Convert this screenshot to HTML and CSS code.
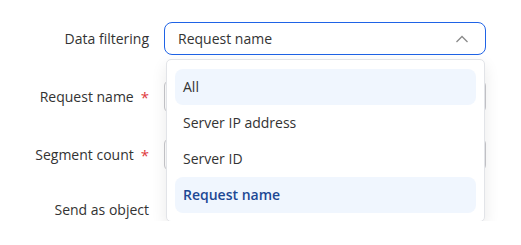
FILE: index.html
```html
<!DOCTYPE html>
<html lang="en">
<head>
    <meta charset="UTF-8">
    <meta name="viewport" content="width=device-width, initial-scale=1.0">
    <title>Data filtering</title>
    <link rel="stylesheet" href="styles.css">
</head>
<body>
    <form class="form">
        <label class="form-label">Data filtering</label>
        <div class="select-wrap">
            <div class="select open">
                <span class="select-value">Request name</span>
                <svg class="chevron" width="14" height="8" viewBox="0 0 14 8">
                    <path d="M1.5 7 L7 1.5 L12.5 7" fill="none" stroke="#8a8a8a" stroke-width="1.3"/>
                </svg>
            </div>
            <!-- Dropdown list -->
            <ul class="dropdown">
                <li class="option hover">All</li>
                <li class="option">Server IP address</li>
                <li class="option">Server ID</li>
                <li class="option selected">Request name</li>
            </ul>
        </div>

        <label class="form-label">Request name <span class="req">*</span></label>
        <div class="input"></div>

        <label class="form-label">Segment count <span class="req">*</span></label>
        <div class="input"></div>

        <label class="form-label small">Send as object</label>
        <div class="switch-row"></div>
    </form>
</body>
</html>
```

FILE: styles.css
```css
body {
    margin: 0;
    font-family: "Open Sans", "Noto Sans", Arial, sans-serif;
    font-size: 14px;
    color: #333;
    background-color: #fff;
}
.form {
    display: grid;
    grid-template-columns: 149px 1fr;
    column-gap: 15px;
    row-gap: 25px;
    padding: 22px 35px 0 0;
}
.form-label {
    display: flex;
    align-items: center;
    justify-content: flex-end;
    height: 33px;
    white-space: nowrap;
}
.form-label.small {
    height: 24px;
    margin-top: 1px;
}
.req {
    color: #e0393e;
    margin-left: 7px;
    font-size: 15px;
}
.select-wrap {
    position: relative;
}
.select {
    display: flex;
    align-items: center;
    justify-content: space-between;
    height: 33px;
    box-sizing: border-box;
    padding: 0 16px 0 13px;
    border: 1px solid #1f63e6;
    border-radius: 8px;
}
.chevron {
    display: block;
}
.input {
    height: 33px;
    box-sizing: border-box;
    border: 1px solid #c8c8cc;
    border-radius: 6px;
}
.switch-row {
    height: 24px;
}
.dropdown {
    position: absolute;
    top: 37px;
    left: 2px;
    right: 1px;
    z-index: 10;
    margin: 0;
    padding: 9px 8px 8px 8px;
    list-style: none;
    background-color: #fff;
    border: 1px solid #e2e4e8;
    border-radius: 5px;
    box-shadow: 0 6px 16px rgba(0, 0, 0, 0.09);
}
.option {
    height: 36px;
    line-height: 36px;
    padding: 0 8px;
    border-radius: 8px;
    color: #333;
}
.option.hover {
    background-color: #f0f6fe;
}
.option.selected {
    background-color: #f0f6fe;
    color: #1d4894;
    font-weight: 600;
}
```
